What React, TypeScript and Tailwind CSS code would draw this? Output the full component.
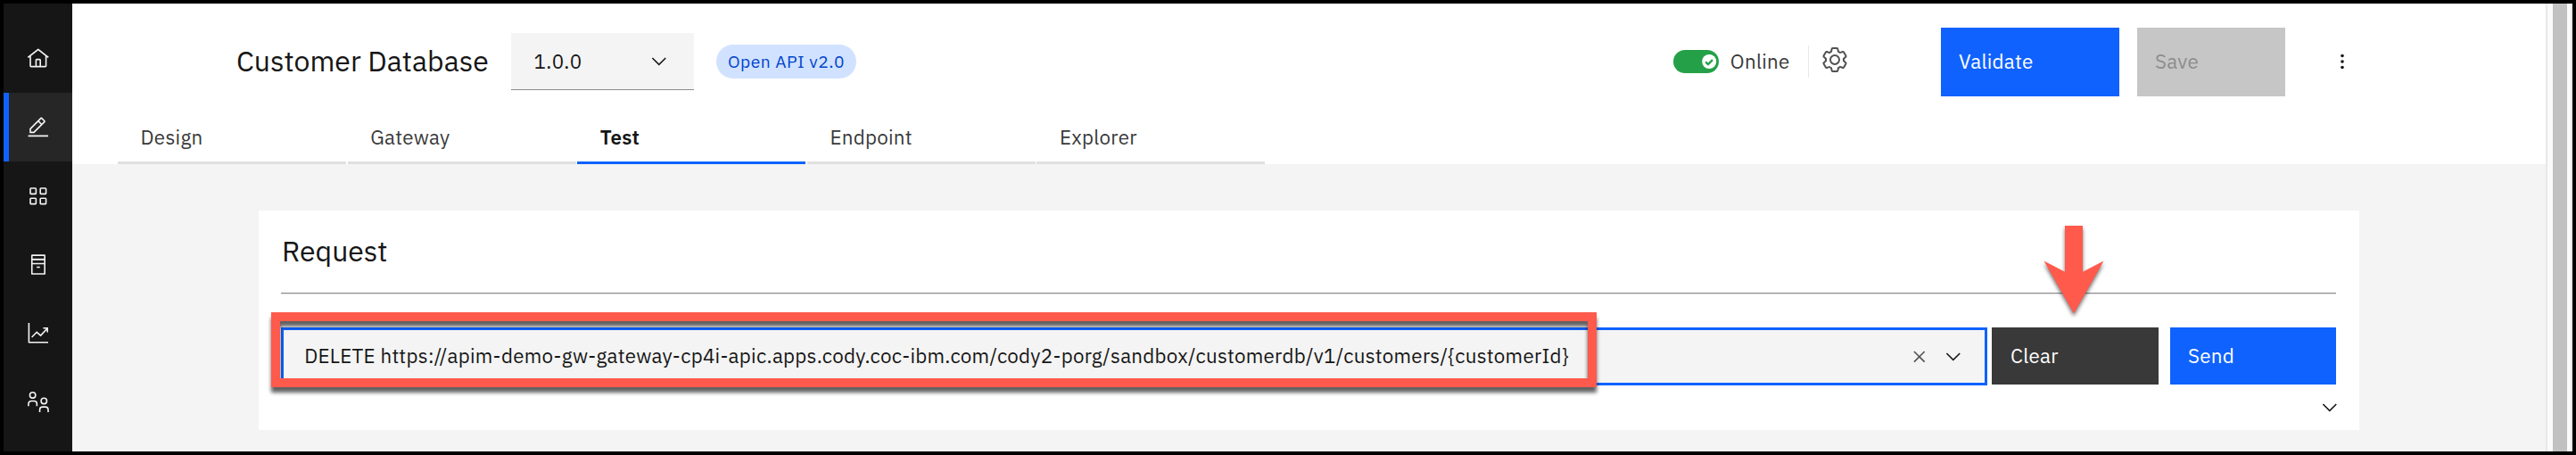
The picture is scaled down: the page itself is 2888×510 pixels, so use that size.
import React from "react";

type IconProps = { className?: string };

const HomeIcon = () => (
  <svg viewBox="0 0 32 32" className="size-[25.6px]" fill="currentColor">
    <path d="M16.6123,2.2138a1.01,1.01,0,0,0-1.2427,0L1,13.4194l1.2427,1.5717L4,13.6208V26a2.0041,2.0041,0,0,0,2,2H26a2.0037,2.0037,0,0,0,2-2V13.63L29.7573,15,31,13.4282ZM18,26H14V18h4Zm2,0V18a2.0023,2.0023,0,0,0-2-2H14a2.002,2.002,0,0,0-2,2v8H6V12.0615l10-7.79,10,7.8005V26Z" />
  </svg>
);

const EditIcon = () => (
  <svg viewBox="0 0 32 32" className="size-[25.6px]" fill="currentColor">
    <path d="M2 27H30V29H2zM25.4 9c.8-.8.8-2 0-2.8l-3.6-3.6c-.8-.8-2-.8-2.8 0l-15 15V24h6.4L25.4 9zM20.4 4L24 7.6l-3 3L17.4 7 20.4 4zM6 22v-3.6l10-10 3.6 3.6-10 10H6z" />
  </svg>
);

const GridIcon = () => (
  <svg viewBox="0 0 32 32" className="size-[25.6px]" fill="none" stroke="currentColor" strokeWidth="2">
    <rect x="5" y="5" width="8" height="8" rx="1" />
    <rect x="19" y="5" width="8" height="8" rx="1" />
    <rect x="5" y="19" width="8" height="8" rx="1" />
    <rect x="19" y="19" width="8" height="8" rx="1" />
  </svg>
);

const CatalogIcon = () => (
  <svg viewBox="0 0 32 32" className="size-[25.6px]" fill="none" stroke="currentColor" strokeWidth="2">
    <rect x="7.2" y="2.6" width="18" height="26.2" rx="0.5" />
    <path d="M7 8.5h18" strokeWidth="2.4" />
    <path d="M7 14.4h18M14 19.3h4.4" strokeWidth="1.8" />
  </svg>
);

const AnalyticsIcon = () => (
  <svg viewBox="0 0 32 32" className="size-[25.6px]" fill="none" stroke="currentColor" strokeWidth="2">
    <path d="M3 1.4v27h27" strokeLinejoin="round" />
    <path d="M7 21.2l7-7.1 5.5 4.8L28.6 9M23 8.4h6v6" />
  </svg>
);

const MembersIcon = () => (
  <svg viewBox="0 0 32 32" className="size-[25.6px] overflow-visible" fill="none" stroke="currentColor" strokeWidth="2">
    <circle cx="8.3" cy="6.1" r="4" />
    <circle cx="24.1" cy="14.3" r="4" />
    <path d="M2.4 21.7v-3.4a4 4 0 0 1 4-4h3.8a4 4 0 0 1 4 4v3.4M18.2 30.1v-3.4a4 4 0 0 1 4-4h3.8a4 4 0 0 1 4 4v3.4" />
  </svg>
);

const ChevronDown = ({ className = "" }: IconProps) => (
  <svg viewBox="0 0 16 16" className={`size-[25.6px] shrink-0 ${className}`} fill="currentColor">
    <path d="M8 11L3 6 3.7 5.3 8 9.6 12.3 5.3 13 6z" />
  </svg>
);

const CloseIcon = ({ className = "" }: IconProps) => (
  <svg viewBox="0 0 32 32" className={`size-[25.6px] shrink-0 ${className}`} fill="currentColor">
    <path d="M24 9.4L22.6 8 16 14.6 9.4 8 8 9.4 14.6 16 8 22.6 9.4 24 16 17.4 22.6 24 24 22.6 17.4 16z" />
  </svg>
);

const SettingsIcon = () => (
  <svg viewBox="0 0 32 32" className="ml-[13px] mb-1 size-8 shrink-0 text-[#525252]" fill="currentColor">
    <path d="M27,16.76c0-.25,0-.5,0-.76s0-.51,0-.77l1.92-1.68A2,2,0,0,0,29.3,11L26.94,7a2,2,0,0,0-1.73-1,2,2,0,0,0-.64.1l-2.43.82a11.35,11.35,0,0,0-1.31-.75l-.51-2.52a2,2,0,0,0-2-1.61H13.64a2,2,0,0,0-2,1.61l-.51,2.52a11.48,11.48,0,0,0-1.32.75L7.43,6.06A2,2,0,0,0,6.79,6,2,2,0,0,0,5.06,7L2.7,11a2,2,0,0,0,.41,2.51L5,15.24c0,.25,0,.5,0,.76s0,.51,0,.77L3.11,18.45A2,2,0,0,0,2.7,21L5.06,25a2,2,0,0,0,1.73,1,2,2,0,0,0,.64-.1l2.43-.82a11.35,11.35,0,0,0,1.31.75l.51,2.52a2,2,0,0,0,2,1.61h4.72a2,2,0,0,0,2-1.61l.51-2.52a11.48,11.48,0,0,0,1.32-.75l2.42.82a2,2,0,0,0,.64.1,2,2,0,0,0,1.73-1L29.3,21a2,2,0,0,0-.41-2.51ZM25.21,24l-3.43-1.16a8.86,8.86,0,0,1-2.71,1.57L18.36,28H13.64l-.71-3.55a9.36,9.36,0,0,1-2.7-1.57L6.79,24,4.43,20l2.72-2.4a8.9,8.9,0,0,1,0-3.13L4.43,12,6.79,8l3.43,1.16a8.86,8.86,0,0,1,2.71-1.57L13.64,4h4.72l.71,3.55a9.36,9.36,0,0,1,2.7,1.57L25.21,8,27.57,12l-2.72,2.4a8.9,8.9,0,0,1,0,3.13L27.57,20ZM16,22a6,6,0,1,1,6-6A5.94,5.94,0,0,1,16,22Zm0-10a3.91,3.91,0,0,0-4,4,3.91,3.91,0,0,0,4,4,3.91,3.91,0,0,0,4-4A3.91,3.91,0,0,0,16,12Z" />
  </svg>
);

const NAV = [HomeIcon, EditIcon, GridIcon, CatalogIcon, AnalyticsIcon, MembersIcon];
const TABS = ["Design", "Gateway", "Test", "Endpoint", "Explorer"];

function Sidebar() {
  return (
    <nav className="flex w-[77px] shrink-0 flex-col bg-[#161616] pt-[23px] text-[#f4f4f4]">
      {NAV.map((Icon, i) => (
        <div
          key={i}
          className={`flex h-[77px] shrink-0 items-center justify-center ${
            i === 1 ? "border-l-6 border-[#0f62fe] bg-[#262626] pr-1.5" : ""
          }`}
        >
          <Icon />
        </div>
      ))}
    </nav>
  );
}

function Header() {
  return (
    <header className="h-[180px] shrink-0 bg-white">
      <div className="flex h-[130px] items-center pl-[183px]">
        <h1 className="-mt-0.5 w-[309px] shrink-0 pl-px text-[32px] leading-10">Customer Database</h1>
        <div className="flex h-16 w-[205px] shrink-0 items-center justify-between border-b border-[#8d8d8d] bg-[#f4f4f4] pr-[26px] pl-[25.6px]">
          <span>1.0.0</span>
          <ChevronDown />
        </div>
        <span className="ml-[25px] flex h-[38px] w-[157px] shrink-0 items-center justify-center rounded-full bg-[#d0e2ff] text-[19.2px] tracking-[0.51px] text-[#0043ce]">
          Open API v2.0
        </span>
        <svg viewBox="0 0 51 26" className="ml-[916px] h-[26px] w-[51px] shrink-0">
          <rect width="51" height="26" rx="13" fill="#24a148" />
          <circle cx="40.2" cy="13" r="8" fill="#fff" />
          <path d="M36.2 13.4l2.8 2.7 5-5" fill="none" stroke="#24a148" strokeWidth="2.3" />
        </svg>
        <span className="ml-[12.8px] w-[87.2px] shrink-0 text-[#393939]">Online</span>
        <span className="h-9 w-px shrink-0 bg-[#e8e8e8]" />
        <SettingsIcon />
        <div className="mt-px ml-[103px] flex h-[77px] w-[200px] shrink-0 items-center bg-[#0f62fe] pb-px pl-5 text-white">
          Validate
        </div>
        <div className="mt-px ml-5 flex h-[77px] w-[166px] shrink-0 items-center bg-[#c6c6c6] pb-px pl-5 text-[#8d8d8d]">
          Save
        </div>
        <svg viewBox="0 0 8 20" className="ml-[60px] h-5 w-2 shrink-0" fill="#161616">
          <circle cx="4" cy="3.5" r="1.8" />
          <circle cx="4" cy="10" r="1.8" />
          <circle cx="4" cy="16.5" r="1.8" />
        </svg>
      </div>
      <div className="flex h-[50px] gap-[1.6px] pl-[51px]">
        {TABS.map((tab) => (
          <div
            key={tab}
            className={`w-64 border-b-3 pl-[25.6px] leading-10 ${
              tab === "Test" ? "border-[#0f62fe] font-semibold" : "border-[#e0e0e0] text-[#393939]"
            }`}
          >
            {tab}
          </div>
        ))}
      </div>
    </header>
  );
}

function RequestCard() {
  return (
    <section className="relative mt-[52px] ml-[209px] h-[246px] w-[2355px] bg-white px-[25px]">
      <h2 className="h-[92px] w-[2304px] pl-px text-[32px] leading-[90px]">Request</h2>
      <div className="h-0.5 w-[2304px] border-t border-[#8d8d8d] bg-[#e0e0e0]" />
      <div className="mt-[37px] flex items-start">
        <div className="flex h-[65px] w-[1913px] items-center border-3 border-[#0f62fe] bg-[#f4f4f4] pl-[23.2px]">
          <span className="grow whitespace-nowrap pb-0.5">
            DELETE https://apim-demo-gw-gateway-cp4i-apic.apps.cody.coc-ibm.com/cody2-porg/sandbox/customerdb/v1/customers/&#123;customerId&#125;
          </span>
          <CloseIcon className="text-[#525252]" />
          <ChevronDown className="mr-[22px] ml-[13px]" />
        </div>
        <div className="ml-[5px] flex h-16 w-[187px] items-center bg-[#393939] pb-px pl-[21px] text-white">Clear</div>
        <div className="ml-[13px] flex h-16 w-[186px] items-center bg-[#0f62fe] pb-px pl-5 text-white">Send</div>
      </div>
      <div className="mt-3 flex w-[2310px] justify-end">
        <ChevronDown />
      </div>
      <div className="absolute top-[114px] left-[14px] h-[84px] w-[1486px] border-10 border-[#ff5a4c] drop-shadow-[0_6px_2px_rgba(0,0,0,0.62)]" />
      <svg
        viewBox="0 0 68 100"
        className="absolute top-[17px] left-[2001px] h-[100px] w-[68px] overflow-visible drop-shadow-[0_3px_2px_rgba(0,0,0,0.55)]"
        fill="#ff5a4c"
      >
        <path d="M24 0H44V51.7L67.5 39.6L34 98.5L0.5 39.6L24 51.7Z" />
      </svg>
    </section>
  );
}

export default function App() {
  return (
    <div className="flex h-[510px] w-[2888px] overflow-hidden border-4 border-black bg-[#f4f4f4] font-['IBM_Plex_Sans','Roboto',sans-serif] text-[22.4px] leading-8 tracking-[0.256px] text-[#161616] [&_h1]:tracking-[0px] [&_h2]:tracking-[0px]">
      <Sidebar />
      <main className="flex min-w-0 flex-1 flex-col">
        <Header />
        <RequestCard />
      </main>
      <div className="flex w-[30px] shrink-0 justify-center border-r-2 border-l-2 border-[#e8e8e8] bg-[#fafafa]">
        <div className="mr-0.5 ml-1 w-4 bg-[#c1c1c1]" />
      </div>
    </div>
  );
}
